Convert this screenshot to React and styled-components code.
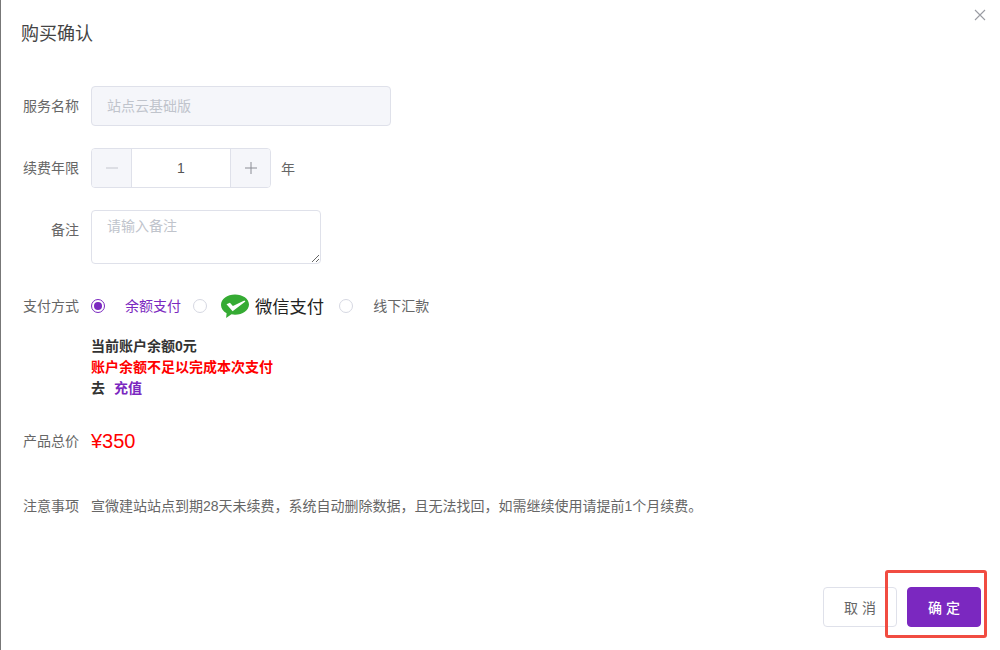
import React from 'react'
import styled, { createGlobalStyle } from 'styled-components'

const GlobalStyle = createGlobalStyle`
  html, body {
    margin: 0;
    padding: 0;
    background: #fff;
    overflow: hidden;
  }
  * {
    box-sizing: border-box;
  }
`

const FONT = `'Liberation Sans', 'Noto Sans CJK SC', sans-serif`
const PURPLE = '#7b28c0'
const LINE = '#dfe1ea'

const Dialog = styled.div`
  position: relative;
  display: flex;
  flex-direction: column;
  width: 1000px;
  height: 650px;
  padding: 0 19px 23px 20px;
  border-left: 1px solid #777;
  background: #fff;
  font-family: ${FONT};
  font-size: 14px;
  color: #666;
`

const Title = styled.h2`
  margin: 22px 0 0;
  font-size: 18px;
  line-height: 24px;
  font-weight: 400;
  color: #444;
`

const Close = styled.button`
  position: absolute;
  top: 9px;
  right: 14px;
  width: 12px;
  height: 12px;
  padding: 0;
  border: 0;
  background: none;
  svg {
    display: block;
  }
`

const Row = styled.div`
  display: flex;
  align-items: ${p => p.$align || 'center'};
  margin-top: ${p => p.$top}px;
`

const Label = styled.label`
  flex: none;
  width: 58px;
  margin-right: 12px;
  text-align: right;
  line-height: 20px;
  color: #666;
  padding-top: ${p => p.$pad || 0}px;
`

const ReadOnly = styled.div`
  width: 300px;
  height: 40px;
  padding: 0 15px;
  line-height: 38px;
  border: 1px solid ${LINE};
  border-radius: 4px;
  background: #f5f6fa;
  color: #c0c4cc;
`

const Stepper = styled.div`
  display: flex;
  width: 180px;
  height: 40px;
  border: 1px solid ${LINE};
  border-radius: 4px;
  overflow: hidden;
`

const StepButton = styled.div`
  display: flex;
  align-items: center;
  justify-content: center;
  flex: none;
  width: 40px;
  background: #f5f6fa;
  border-${p => p.$side}: 1px solid ${LINE};
  color: ${p => p.$muted ? '#c4c6ce' : '#8a8c94'};
`

const StepValue = styled.div`
  flex: 1;
  text-align: center;
  line-height: 38px;
  color: #555;
`

const Unit = styled.span`
  margin-left: 10px;
  color: #666;
`

const Note = styled.textarea`
  display: block;
  width: 230px;
  height: 54px;
  padding: 5px 15px;
  border: 1px solid ${LINE};
  border-radius: 4px;
  background: #fff;
  font-family: ${FONT};
  font-size: 14px;
  line-height: 20px;
  color: #555;
  outline: none;
  &::placeholder {
    color: #c0c4cc;
    opacity: 1;
  }
`

const Radio = styled.span`
  flex: none;
  display: flex;
  align-items: center;
  justify-content: center;
  width: 14px;
  height: 14px;
  margin-right: ${p => p.$gap}px;
  border-radius: 50%;
  border: 1px solid ${p => p.$on ? PURPLE : '#d6d8e2'};
  &::after {
    content: '';
    display: ${p => p.$on ? 'block' : 'none'};
    width: 8px;
    height: 8px;
    border-radius: 50%;
    background: ${PURPLE};
  }
`

const PayOption = styled.span`
  margin-right: 12px;
  line-height: 20px;
  color: ${p => p.$on ? PURPLE : '#666'};
`

const WechatPay = styled.span`
  display: flex;
  align-items: center;
  margin-right: 15px;
  font-size: 17.3px;
  color: #222;
  svg {
    margin-right: 6px;
  }
`

const Balance = styled.div`
  margin: 18px 0 0 70px;
  font-weight: 700;
  line-height: 21px;
  color: #333;
`

const Warn = styled.div`
  color: #f00;
`

const Recharge = styled.a`
  margin-left: 9px;
  color: ${PURPLE};
`

const Price = styled.div`
  font-size: 20px;
  line-height: 24px;
  color: #f00;
`

const Notice = styled.div`
  line-height: 20px;
  color: #666;
`

const Footer = styled.div`
  display: flex;
  justify-content: flex-end;
  gap: 10px;
  margin-top: auto;
`

const Action = styled.button`
  width: 74px;
  height: 40px;
  padding: 0 0 0 4px;
  border: 1px solid ${p => p.$primary ? PURPLE : LINE};
  border-radius: 4px;
  background: ${p => p.$primary ? PURPLE : '#fff'};
  color: ${p => p.$primary ? '#fff' : '#666'};
  font-family: ${FONT};
  font-size: 14px;
  font-weight: ${p => p.$primary ? 500 : 400};
  letter-spacing: 4px;
`

const Highlighted = styled.div`
  position: relative;
`

const Callout = styled.span`
  position: absolute;
  top: -17px;
  bottom: -11px;
  left: -22px;
  right: -6px;
  border: 3px solid #f14c41;
  border-radius: 3px;
  pointer-events: none;
`

const WechatLogo = () => (
  <svg width="28" height="25" viewBox="0 -1.5 28 25">
    <path
      d="M14 0C6.3 0 0 4.7 0 10.4c0 3.5 2.3 6.5 5.6 8.3l-.5 4.8 5.4-3.7c1.1.2 2.3.4 3.5.4 7.7 0 14-4.5 14-10.2S21.7 0 14 0z"
      fill="#35ab33"
    />
    <path d="M5.5 9.8l3.4-1.6 3 3.4L23.4 6l1 1.1-12.8 9.6z" fill="#fff" />
  </svg>
)

const App = () => (
  <Dialog>
    <GlobalStyle />
    <Title>购买确认</Title>
    <Close aria-label="close">
      <svg width="12" height="12" viewBox="0 0 12 12">
        <path d="M1 1l10 10M11 1L1 11" stroke="#9a9ca3" strokeWidth="1.1" fill="none" />
      </svg>
    </Close>

    <Row $top={40}>
      <Label>服务名称</Label>
      <ReadOnly>站点云基础版</ReadOnly>
    </Row>

    <Row $top={22}>
      <Label>续费年限</Label>
      <Stepper>
        <StepButton $side="right" $muted>
          <svg width="12" height="12" viewBox="0 0 12 12">
            <path d="M0 6h12" stroke="currentColor" strokeWidth="1" />
          </svg>
        </StepButton>
        <StepValue>1</StepValue>
        <StepButton $side="left">
          <svg width="12" height="12" viewBox="0 0 12 12">
            <path d="M0 6h12M6 0v12" stroke="currentColor" strokeWidth="1" />
          </svg>
        </StepButton>
      </Stepper>
      <Unit>年</Unit>
    </Row>

    <Row $top={22} $align="flex-start">
      <Label $pad={10}>备注</Label>
      <Note placeholder="请输入备注" />
    </Row>

    <Row $top={29}>
      <Label>支付方式</Label>
      <Radio $on $gap={20} />
      <PayOption $on>余额支付</PayOption>
      <Radio $gap={14} />
      <WechatPay>
        <WechatLogo />
        微信支付
      </WechatPay>
      <Radio $gap={20} />
      <PayOption>线下汇款</PayOption>
    </Row>

    <Balance>
      <div>当前账户余额0元</div>
      <Warn>账户余额不足以完成本次支付</Warn>
      <div>
        去<Recharge>充值</Recharge>
      </div>
    </Balance>

    <Row $top={30}>
      <Label>产品总价</Label>
      <Price>¥350</Price>
    </Row>

    <Row $top={43}>
      <Label>注意事项</Label>
      <Notice>宣微建站站点到期28天未续费，系统自动删除数据，且无法找回，如需继续使用请提前1个月续费。</Notice>
    </Row>

    <Footer>
      <Action>取消</Action>
      <Highlighted>
        <Action $primary>确定</Action>
        <Callout />
      </Highlighted>
    </Footer>
  </Dialog>
)

export default App
